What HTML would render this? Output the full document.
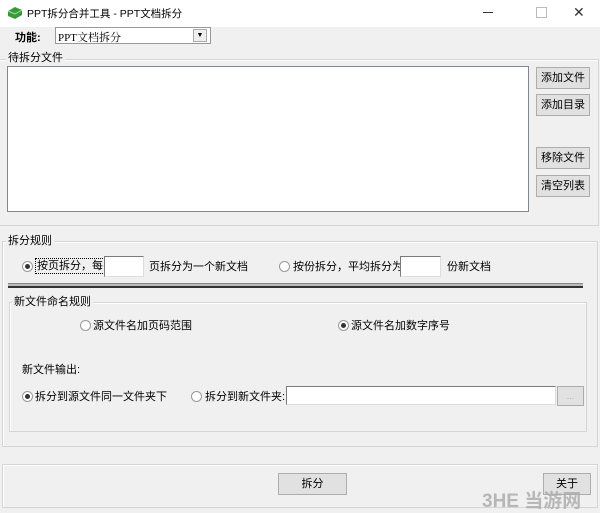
<html><head><style>
body{margin:0;width:600px;height:508px;background:#f0f0f0;font-family:"Liberation Sans","Noto Sans CJK SC",sans-serif;font-size:11px;color:#000;position:relative;overflow:hidden}
.a{position:absolute}
.btn{position:absolute;background:#e1e1e1;border:1px solid #adadad;text-align:center;box-sizing:border-box}
.grp{position:absolute;border:1px solid #d5d5d5;box-shadow:inset 1px 1px 0 #fff;box-sizing:border-box}
.lbl{position:absolute;background:#f0f0f0;padding:0 2px;line-height:14px}
.in{position:absolute;background:#fff;border:1px solid #7a7a7a;border-right-color:#ddd;border-bottom-color:#ddd;box-sizing:border-box}
.rad{position:absolute;width:9px;height:9px;border:1px solid #999;border-radius:50%;background:#fff}
.rad.on::after{content:"";position:absolute;left:2px;top:2px;width:5px;height:5px;border-radius:50%;background:#333}
</style></head><body>
<div class="a" style="left:0;top:0;width:600px;height:27px;background:#fff"></div>
<svg class="a" style="left:7px;top:6px" width="16" height="14"><path d="M1 5 L8 1 L15 4 L15 9 L8 13 L1 10Z" fill="#3a9a3a"/><path d="M1 5 L8 8 L15 4" fill="none" stroke="#a8e0a8"/></svg>
<div class="a" style="left:27px;top:6px;font-size:10.5px">PPT拆分合并工具 - PPT文档拆分</div>
<div class="a" style="left:483px;top:12px;width:10px;height:1px;background:#333"></div>
<div class="a" style="left:536px;top:7px;width:9px;height:9px;border:1px solid #bbb"></div>
<div class="a" style="left:573px;top:4px;font-size:14px;color:#333">✕</div>
<div class="a" style="left:15px;top:29px;font-weight:bold">功能:</div>
<div class="in" style="left:55px;top:27px;width:156px;height:17px;border:1px solid #999"><span class="a" style="left:2px;top:1px;font-family:'Liberation Serif','Noto Serif CJK SC',serif">PPT文档拆分</span><div class="a" style="left:137px;top:1px;width:14px;height:13px;background:#eee;border:1px solid #aaa;box-sizing:border-box;font-size:7px;text-align:center;line-height:12px">▼</div></div>
<div class="grp" style="left:-2px;top:59px;width:601px;height:167px"></div>
<div class="lbl" style="left:6px;top:51px">待拆分文件</div>
<div class="in" style="left:7px;top:66px;width:522px;height:146px;border-color:#828790"></div>
<div class="btn" style="left:536px;top:67px;width:54px;height:22px;line-height:20px">添加文件</div>
<div class="btn" style="left:536px;top:94px;width:54px;height:22px;line-height:20px">添加目录</div>
<div class="btn" style="left:536px;top:147px;width:54px;height:22px;line-height:20px">移除文件</div>
<div class="btn" style="left:536px;top:175px;width:54px;height:22px;line-height:20px">清空列表</div>
<div class="grp" style="left:2px;top:241px;width:596px;height:206px"></div>
<div class="lbl" style="left:6px;top:234px">拆分规则</div>
<div class="rad on" style="left:22px;top:261px"></div>
<div class="a" style="left:35px;top:258px;border:1px dotted #000;padding:0 1px;line-height:14px">按页拆分，每</div>
<div class="in" style="left:104px;top:256px;width:40px;height:21px"></div>
<div class="a" style="left:149px;top:258px">页拆分为一个新文档</div>
<div class="rad" style="left:279px;top:261px"></div>
<div class="a" style="left:293px;top:258px">按份拆分，平均拆分为</div>
<div class="in" style="left:400px;top:256px;width:41px;height:21px"></div>
<div class="a" style="left:447px;top:258px">份新文档</div>
<div class="a" style="left:8px;top:283px;width:575px;height:2px;border-top:1px solid #888;border-bottom:2px solid #333;background:#bbb"></div>
<div class="grp" style="left:9px;top:302px;width:578px;height:130px"></div>
<div class="lbl" style="left:12px;top:295px">新文件命名规则</div>
<div class="rad" style="left:80px;top:320px"></div>
<div class="a" style="left:93px;top:317px">源文件名加页码范围</div>
<div class="rad on" style="left:338px;top:320px"></div>
<div class="a" style="left:351px;top:317px">源文件名加数字序号</div>
<div class="a" style="left:22px;top:361px">新文件输出:</div>
<div class="rad on" style="left:22px;top:391px"></div>
<div class="a" style="left:35px;top:388px">拆分到源文件同一文件夹下</div>
<div class="rad" style="left:191px;top:391px"></div>
<div class="a" style="left:205px;top:388px">拆分到新文件夹:</div>
<div class="in" style="left:286px;top:386px;width:270px;height:19px"></div>
<div class="btn" style="left:557px;top:386px;width:27px;height:20px;color:#aaa;font-size:9px;line-height:18px">...</div>
<div class="grp" style="left:2px;top:464px;width:596px;height:44px"></div>
<div class="btn" style="left:278px;top:473px;width:69px;height:22px;line-height:20px">拆分</div>
<div class="btn" style="left:543px;top:473px;width:48px;height:22px;line-height:20px">关于</div>
<div class="a" style="left:482px;top:486px;font-size:19px;color:#aaa;opacity:.8;font-weight:bold">3HE 当游网</div>
</body></html>
